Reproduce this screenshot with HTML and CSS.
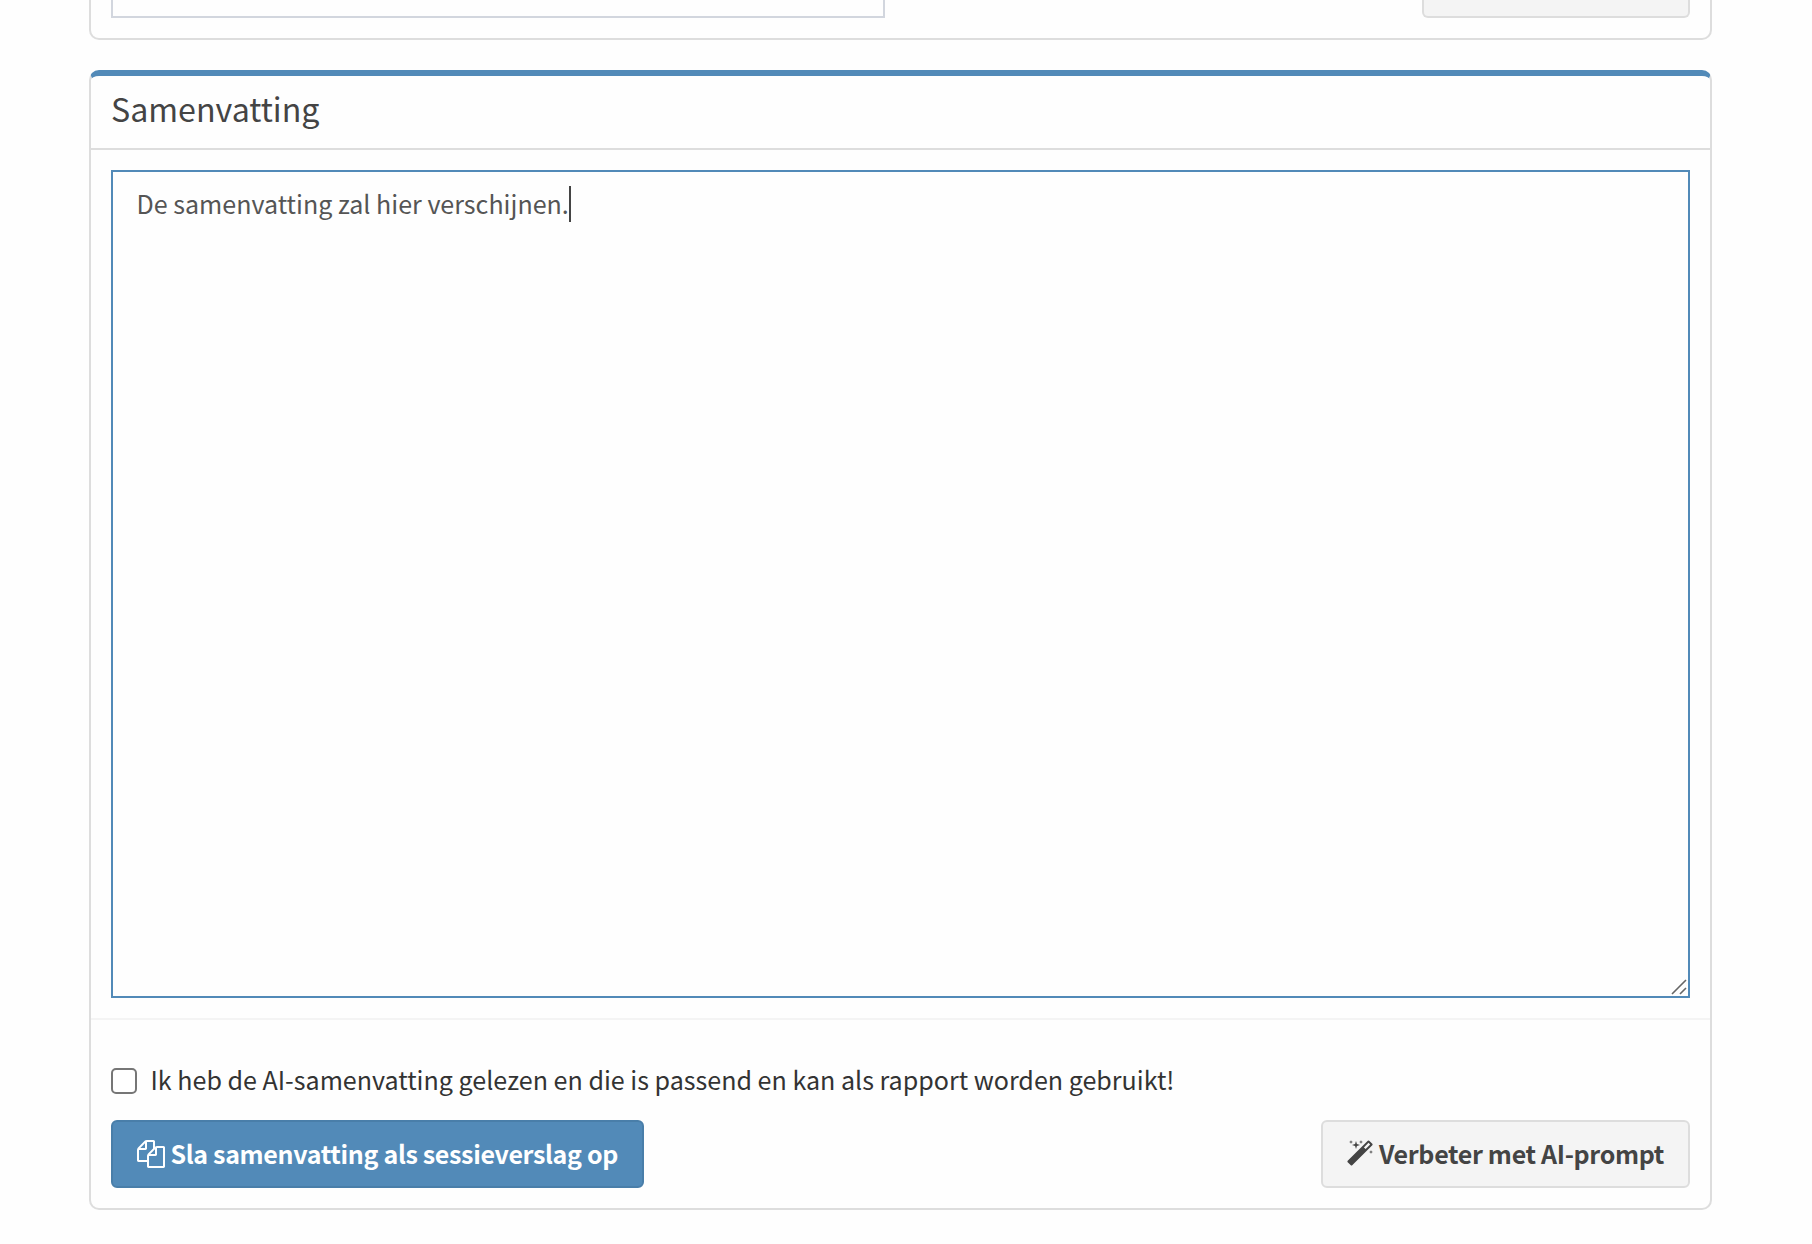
FILE: index.html
```
<!DOCTYPE html>
<html lang="nl">
<head>
  <meta charset="UTF-8">
  <meta name="viewport" content="width=device-width, initial-scale=1.0">
  <title>Samenvatting</title>
  <link rel="stylesheet" href="styles.css">
</head>
<body>
  <div class="content">
    <!-- Vorig blok -->
    <div class="box box-previous">
      <div class="box-row">
        <div class="input-end"></div>
        <div class="btn btn-default btn-end"></div>
      </div>
    </div>

    <!-- Samenvatting -->
    <div class="box box-primary">
      <div class="box-header">
        <h3 class="box-title">Samenvatting</h3>
      </div>
      <div class="box-body">
        <div class="form-control" role="textbox" aria-multiline="true">
          <span class="value">De samenvatting zal hier verschijnen.</span>
          <svg class="resizer" width="16" height="16" viewBox="0 0 16 16">
            <path d="M1 15 15 1M9 15l6-6"/>
          </svg>
        </div>
      </div>
      <div class="box-footer">
        <label class="check">
          <input type="checkbox">
          <span>Ik heb de AI-samenvatting gelezen en die is passend en kan als rapport worden gebruikt!</span>
        </label>
        <div class="box-row">
          <button class="btn btn-primary">
            <svg class="icon-copy" width="28" height="28" viewBox="0 0 1792 1792">
              <path d="M1696 384q40 0 68 28t28 68v1216q0 40-28 68t-68 28h-960q-40 0-68-28t-28-68v-288h-544q-40 0-68-28t-28-68v-672q0-40 20-88t48-76l408-408q28-28 76-48t88-20h416q40 0 68 28t28 68v328q68-40 128-40h416zm-544 213l-299 299h299v-299zm-640-384l-299 299h299v-299zm196 647l316-316v-416h-384v416q0 40-28 68t-68 28h-416v640h512v-256q0-40 20-88t48-76zm956 804v-1152h-384v416q0 40-28 68t-68 28h-416v640h896z"/>
            </svg>
            <span>Sla samenvatting als sessieverslag op</span>
          </button>
          <button class="btn btn-default">
            <svg class="icon-magic" width="26" height="28" viewBox="0 0 1664 1792">
              <path d="M1190 581l293-293-107-107-293 293zm447-293q0 27-18 45l-1286 1286q-18 18-45 18t-45-18l-198-198q-18-18-18-45t18-45l1286-1286q18-18 45-18t45 18l198 198q18 18 18 45zm-1351-190l98 30-98 30-30 98-30-98-98-30 98-30 30-98zm350 162l196 60-196 60-60 196-60-196-196-60 196-60 60-196zm930 478l98 30-98 30-30 98-30-98-98-30 98-30 30-98zm-640-640l98 30-98 30-30 98-30-98-98-30 98-30 30-98z"/>
            </svg>
            <span>Verbeter met AI-prompt</span>
          </button>
        </div>
      </div>
    </div>
  </div>
</body>
</html>
```
FILE: styles.css
```
* {
  box-sizing: border-box;
}

body {
  margin: 0;
  background: #fefefe;
  color: #333;
  font-family: "Noto Sans CJK SC", "Noto Sans", sans-serif;
  font-size: 25.07px;
}

.content {
  width: 1623px;
  margin-left: 89px;
}

.box {
  border: 2px solid #ddd;
  border-radius: 10px;
  background: #fefefe;
}

.box-previous {
  height: 40px;
  margin-bottom: 30px;
  padding: 0 20px;
  border-top: 0;
  border-radius: 0 0 10px 10px;
}

.box-primary {
  border-top: 6px solid #528ab8;
}

.box-row {
  display: flex;
  justify-content: space-between;
}

.input-end {
  width: 774px;
  height: 18px;
  border: 2px solid #d2d6de;
  border-top: 0;
}

.box-header {
  height: 74px;
  padding: 14px 20px 0;
  border-bottom: 2px solid #ddd;
}

.box-title {
  margin: 0;
  color: #444;
  font-size: 32.2px;
  font-weight: 400;
  line-height: 36px;
}

.box-body {
  padding: 20px;
}

.form-control {
  display: flex;
  align-items: flex-start;
  position: relative;
  height: 828px;
  padding: 14px 23.5px;
  border: 2px solid #528ab8;
  color: #555;
}

.value {
  height: 36px;
  border-right: 2px solid #444;
  line-height: 34px;
}

.resizer {
  position: absolute;
  right: 1px;
  bottom: 1px;
  fill: none;
  stroke: #666;
  stroke-width: 1.6;
}

.box-footer {
  padding: 46px 20px 20px;
  border-top: 2px solid #f4f4f4;
}

.check {
  display: flex;
  align-items: center;
  gap: 13.5px;
  height: 30px;
  margin-bottom: 24px;
  line-height: 26px;
  white-space: nowrap;
}

.check span {
  height: 30px;
}

.check input {
  flex: none;
  width: 26px;
  height: 26px;
  margin: 0;
  border: 2px solid #767676;
  border-radius: 5px;
  background: #fff;
  appearance: none;
}

.btn {
  display: flex;
  align-items: center;
  gap: 6px;
  height: 68px;
  padding: 0 24px 0 23.5px;
  border: 2px solid #ddd;
  border-radius: 6px;
  font-family: inherit;
  font-size: 25px;
  font-weight: 600;
  letter-spacing: -0.33px;
  white-space: nowrap;
}

.btn svg {
  flex: none;
  fill: currentColor;
}

.btn span {
  height: 36px;
  line-height: 34px;
}

.btn-primary {
  border-color: #497ea9;
  background: #528ab8;
  color: #fff;
}

.btn-default {
  background: #f4f4f4;
  color: #444;
}

.btn-end {
  width: 268px;
  height: 18px;
  border-top: 0;
  border-radius: 0 0 6px 6px;
}
```
